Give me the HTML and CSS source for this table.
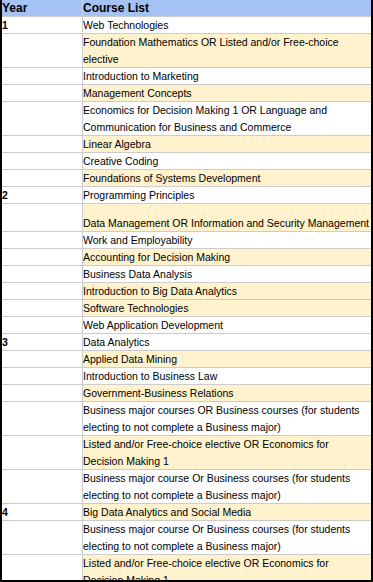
FILE: index.html
```html
<!DOCTYPE html>
<html lang="en">
<head>
<meta charset="utf-8">
<title>Course List</title>
<link rel="stylesheet" href="styles.css">
</head>
<body>
<div class="sheet">
<table class="grid">
<colgroup><col class="c-year"><col class="c-course"></colgroup>
<thead>
<tr class="head"><th class="year">Year</th><th class="course">Course List</th></tr>
</thead>
<tbody>
<tr><td class="year">1</td><td class="course">Web Technologies</td></tr>
<tr><td class="year"></td><td class="course alt">Foundation Mathematics OR Listed and/or Free-choice elective</td></tr>
<tr><td class="year"></td><td class="course">Introduction to Marketing</td></tr>
<tr><td class="year"></td><td class="course alt">Management Concepts</td></tr>
<tr><td class="year"></td><td class="course">Economics for Decision Making 1 OR Language and Communication for Business and Commerce</td></tr>
<tr><td class="year"></td><td class="course alt">Linear Algebra</td></tr>
<tr><td class="year"></td><td class="course">Creative Coding</td></tr>
<tr><td class="year"></td><td class="course alt">Foundations of Systems Development</td></tr>
<tr><td class="year">2</td><td class="course">Programming Principles</td></tr>
<tr class="tall"><td class="year"></td><td class="course alt nowrap">Data Management OR Information and Security Management</td></tr>
<tr><td class="year"></td><td class="course">Work and Employability</td></tr>
<tr><td class="year"></td><td class="course alt">Accounting for Decision Making</td></tr>
<tr><td class="year"></td><td class="course">Business Data Analysis</td></tr>
<tr><td class="year"></td><td class="course alt">Introduction to Big Data Analytics</td></tr>
<tr><td class="year"></td><td class="course alt">Software Technologies</td></tr>
<tr><td class="year"></td><td class="course">Web Application Development</td></tr>
<tr><td class="year">3</td><td class="course">Data Analytics</td></tr>
<tr><td class="year"></td><td class="course alt">Applied Data Mining</td></tr>
<tr><td class="year"></td><td class="course">Introduction to Business Law</td></tr>
<tr><td class="year"></td><td class="course alt">Government-Business Relations</td></tr>
<tr><td class="year"></td><td class="course">Business major courses OR Business courses (for students electing to not complete a Business major)</td></tr>
<tr><td class="year"></td><td class="course alt">Listed and/or Free-choice elective OR Economics for Decision Making 1</td></tr>
<tr><td class="year"></td><td class="course">Business major course Or Business courses (for students electing to not complete a Business major)</td></tr>
<tr><td class="year">4</td><td class="course alt">Big Data Analytics and Social Media</td></tr>
<tr><td class="year"></td><td class="course">Business major course Or Business courses (for students electing to not complete a Business major)</td></tr>
<tr><td class="year"></td><td class="course alt">Listed and/or Free-choice elective OR Economics for Decision Making 1</td></tr>
</tbody>
</table>
</div>
</body>
</html>
```
FILE: styles.css
```css
html, body {
  margin: 0;
  padding: 0;
  background: #ffffff;
}

.sheet {
  box-sizing: border-box;
  width: 373px;
  height: 582px;
  border-left: 2px solid #000;
  border-right: 2px solid #000;
  border-bottom: 2px solid #000;
  overflow: hidden;
  background: #ffffff;
}

.grid {
  border-collapse: collapse;
  border-spacing: 0;
  table-layout: fixed;
  width: 369px;
  font-family: "Liberation Sans", Arial, sans-serif;
  font-size: 10.5px;
  color: #000;
}

.c-year { width: 81px; }
.c-course { width: 288px; }

.grid th,
.grid td {
  padding: 0;
  line-height: 17px;
  vertical-align: bottom;
  text-align: left;
  box-shadow: inset 0 -1px 0 #cccccc;
  overflow: hidden;
}

.grid td.year,
.grid th.year {
  font-weight: bold;
  box-shadow: inset 0 -1px 0 #cccccc, inset -1px 0 0 #cccccc;
  padding-left: 0;
}

.head th {
  background: #a4c2f4;
  font-size: 12px;
  font-weight: bold;
  height: 17px;
  line-height: 17px;
}

.head th.year {
  box-shadow: inset 0 -1px 0 #cccccc, inset -1px 0 0 #c4d6f4;
}

.grid td.course {
  font-weight: normal;
  padding-left: 0;
}

.grid td.alt {
  background: #fff2cc;
}

.tall td {
  height: 28px;
}

.nowrap {
  white-space: nowrap;
}
```
